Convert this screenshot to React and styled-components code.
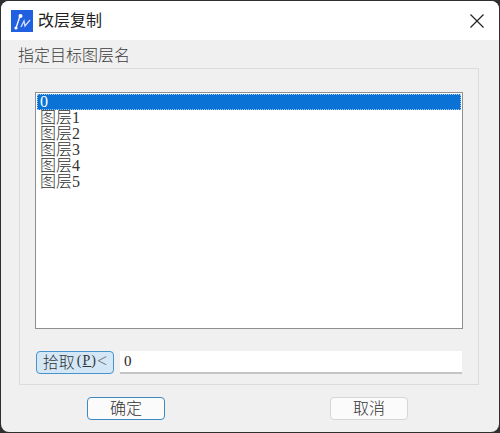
import React from 'react';
import styled, { createGlobalStyle } from 'styled-components';

const layers = ['0', '图层1', '图层2', '图层3', '图层4', '图层5'];

const App = () => {
  return (
    <>
      <GlobalStyle />
      <Dialog>
        <TitleBar>
          <AppIcon viewBox="0 0 22 22">
            <rect width="22" height="22" fill="#1f5fe0" />
            <path d="M5 18 L9 6" stroke="#fff" strokeWidth="1.3" fill="none" />
            <circle cx="5" cy="18" r="1.6" fill="#fff" />
            <circle cx="9.5" cy="6" r="2" fill="#fff" />
            <path d="M10 17 L13 11 L14 16 L19 10" stroke="#cfe0ff" strokeWidth="1.3" fill="none" />
          </AppIcon>
          <Title>改层复制</Title>
          <CloseIcon viewBox="0 0 14 14">
            <path d="M0.5 0.5 L13.5 13.5 M13.5 0.5 L0.5 13.5" stroke="#222" strokeWidth="1.2" />
          </CloseIcon>
        </TitleBar>
        <Body>
          <GroupLabel>指定目标图层名</GroupLabel>
          <Group>
            <LayerList>
              {layers.map((name, i) => (
                <LayerRow key={name} $selected={i === 0}>{name}</LayerRow>
              ))}
            </LayerList>
            <PickRow>
              <PickButton>拾取<PickKey>(<u>P</u>)</PickKey><PickArrow>&lt;</PickArrow></PickButton>
              <PickInput>0</PickInput>
            </PickRow>
          </Group>
          <Actions>
            <ActionButton $primary>确定</ActionButton>
            <ActionButton>取消</ActionButton>
          </Actions>
        </Body>
      </Dialog>
    </>
  );
};

export default App;

const GlobalStyle = createGlobalStyle`
  html, body {
    margin: 0;
    padding: 0;
    background: #2f2f2f;
  }
`;

const Dialog = styled.div`
  box-sizing: border-box;
  width: 498px;
  height: 431px;
  margin: 1px 0 0 1px;
  background: #f0f0f0;
  border-radius: 8px;
  overflow: hidden;
  display: flex;
  flex-direction: column;
  color: #222;
  font-family: "Noto Sans CJK SC", sans-serif;
  font-weight: 300;
`;

const TitleBar = styled.div`
  height: 39px;
  flex: none;
  display: flex;
  align-items: center;
  padding: 0 14px 0 10px;
  background: #fff;
`;

const AppIcon = styled.svg`
  width: 22px;
  height: 22px;
  margin-top: 1px;
`;

const Title = styled.div`
  flex: 1;
  margin: 0 0 3px 5px;
  font-size: 16px;
  font-weight: 400;
  color: #222;
`;

const CloseIcon = styled.svg`
  width: 14px;
  height: 14px;
  margin-right: 1px;
`;

const Body = styled.div`
  flex: 1;
  display: flex;
  flex-direction: column;
  padding: 6px 20px 0 18px;
`;

const GroupLabel = styled.div`
  height: 22px;
  line-height: 19px;
  margin: -1px 0 1px -1px;
  font-size: 16px;
  color: #3c3c3c;
`;

const Group = styled.div`
  box-sizing: border-box;
  height: 317px;
  display: flex;
  flex-direction: column;
  padding: 23px 15px 0 15px;
  border: 1px solid #dcdcdc;
`;

const LayerList = styled.div`
  box-sizing: border-box;
  height: 237px;
  padding: 1px;
  background: #fff;
  border: 1px solid #8f8f8f;
`;

const LayerRow = styled.div`
  box-sizing: border-box;
  height: 16px;
  line-height: 16px;
  padding-left: 3px;
  font-family: "Liberation Serif", "Noto Sans CJK SC", serif;
  font-size: 16px;
  color: ${(p) => (p.$selected ? '#fff' : '#333')};
  background: ${(p) => (p.$selected ? '#0a72d4' : 'transparent')};
  outline: ${(p) => (p.$selected ? '1px dotted #9fc8ee' : 'none')};
  outline-offset: -1px;
`;

const PickRow = styled.div`
  display: flex;
  gap: 6px;
  margin-top: 22px;
  height: 23px;
`;

const PickButton = styled.div`
  box-sizing: border-box;
  width: 78px;
  margin-left: 1px;
  padding-bottom: 3px;
  display: flex;
  align-items: center;
  justify-content: center;
  font-family: "Liberation Serif", "Noto Sans CJK SC", serif;
  font-size: 16px;
  color: #333;
  background: #d3e7f7;
  border: 1px solid #4a93c8;
  border-radius: 4px;
`;

const PickKey = styled.span`
  margin-left: 2px;
  font-size: 14px;
  letter-spacing: 1px;
`;

const PickArrow = styled.span`
  font-size: 18px;
  color: #777;
`;

const PickInput = styled.div`
  box-sizing: border-box;
  width: 342px;
  padding-left: 4px;
  line-height: 20px;
  font-family: "Liberation Serif", serif;
  font-size: 15px;
  color: #222;
  background: #fff;
  border-bottom: 2px solid #c4c4c4;
`;

const Actions = styled.div`
  display: flex;
  justify-content: space-between;
  margin-top: 12px;
  padding: 0 71px 0 68px;
`;

const ActionButton = styled.div`
  box-sizing: border-box;
  width: 78px;
  height: 23px;
  padding-bottom: 3px;
  display: flex;
  align-items: center;
  justify-content: center;
  font-size: 16px;
  color: #333;
  background: #fbfbfb;
  border: 1px solid ${(p) => (p.$primary ? '#3f88c0' : '#d6d6d6')};
  border-radius: 4px;
`;
